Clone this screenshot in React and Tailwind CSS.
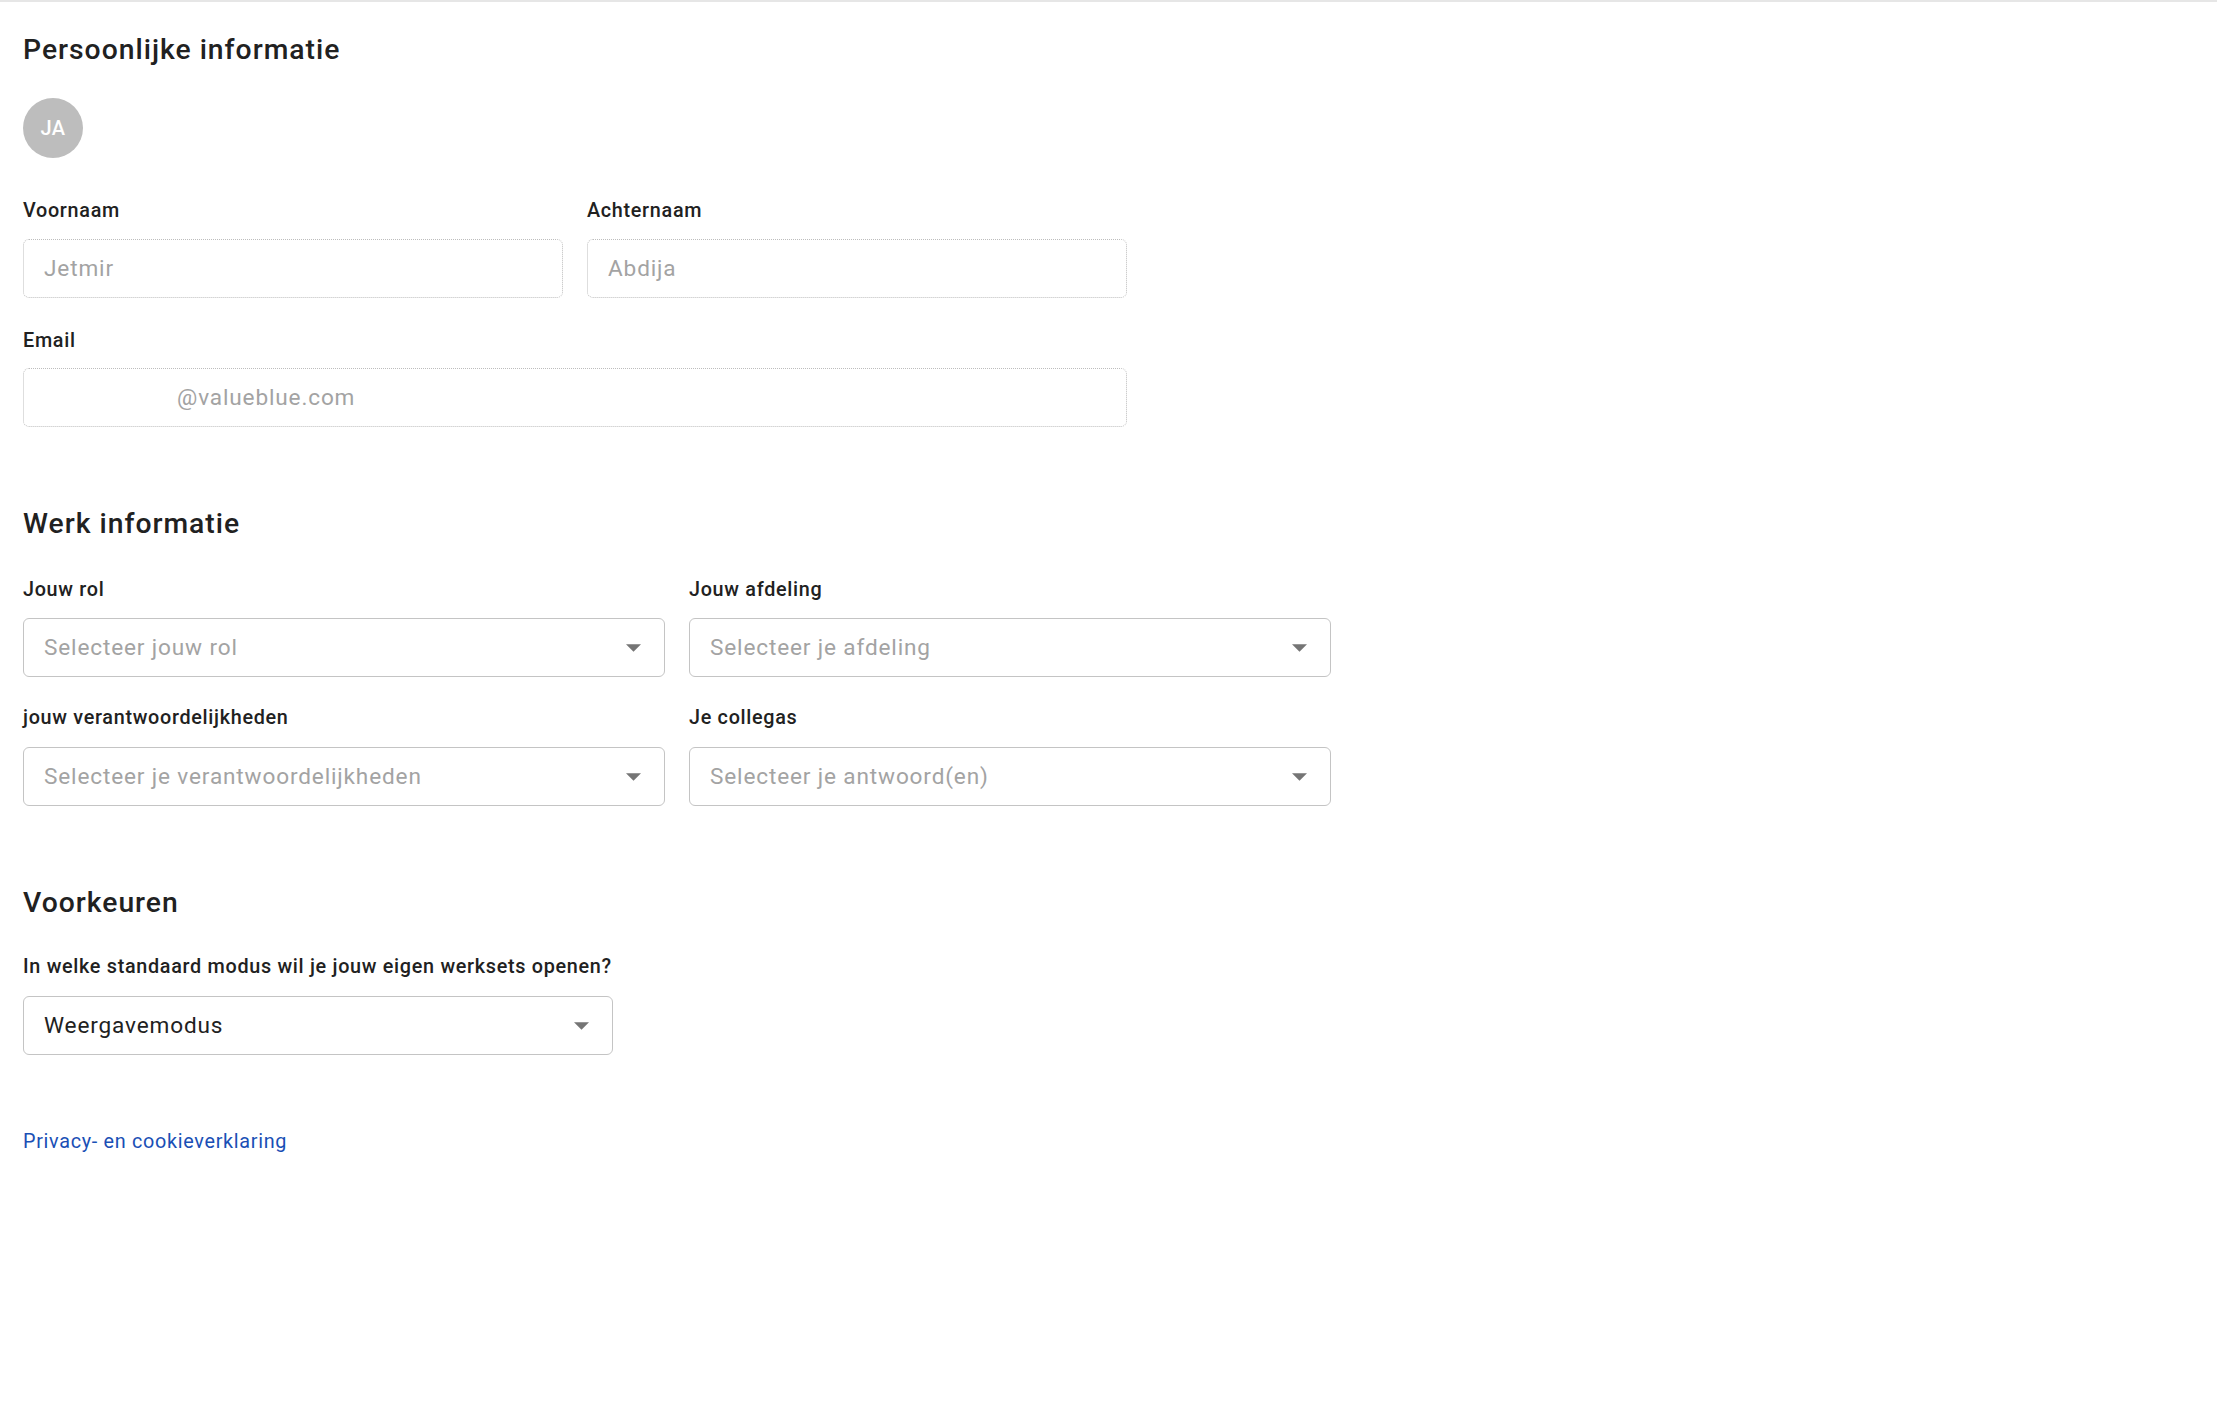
import React from "react";

function Label({ children, className = "" }) {
  return (
    <div className={"text-[19.8px] leading-[24px] font-medium tracking-[0.7px] text-[#212121] " + className}>
      {children}
    </div>
  );
}

function TextField({ placeholder }) {
  return (
    <div className="h-[59px] w-full rounded-[6px] border border-dotted border-[#bdbdbd] flex items-center pl-[20px]">
      <input
        className="w-full bg-transparent outline-none text-[22.6px] tracking-[0.85px] text-[#212121] placeholder:text-[#a3a3a3]"
        placeholder={placeholder}
      />
    </div>
  );
}

function Arrow() {
  return (
    <svg width="15" height="8" viewBox="0 0 10 5" className="shrink-0">
      <path d="M0 0 L5 5 L10 0 Z" fill="#757575" />
    </svg>
  );
}

function Select({ text, placeholder = true, className = "" }) {
  return (
    <div
      className={
        "h-[59px] rounded-[6px] border border-[#c4c4c4] flex items-center justify-between pl-[20px] pr-[23px] " +
        className
      }
    >
      <span className={"text-[22.6px] tracking-[0.85px] " + (placeholder ? "text-[#a3a3a3]" : "text-[#212121]")}>
        {text}
      </span>
      <Arrow />
    </div>
  );
}

function Heading({ children, className = "" }) {
  return (
    <h2 className={"text-[28.3px] leading-[34px] font-medium tracking-[1px] text-[#212121] " + className}>
      {children}
    </h2>
  );
}

export default function App() {
  return (
    <div className="min-h-[1402px] w-full bg-white border-t-2 border-[#e6e6e6] font-['Roboto',sans-serif] pl-[23px]">
      {/* Persoonlijke informatie */}
      <Heading className="mt-[31px]">Persoonlijke informatie</Heading>
      <div className="mt-[31px] w-[60px] h-[60px] rounded-full bg-[#bdbdbd] flex items-center justify-center text-white text-[20px] font-medium tracking-[0.5px]">
        JA
      </div>

      <div className="mt-[41px] grid grid-cols-[540px_540px] gap-x-[24px]">
        <div>
          <Label>Voornaam</Label>
          <div className="mt-[16px]">
            <TextField placeholder="Jetmir" />
          </div>
        </div>
        <div>
          <Label>Achternaam</Label>
          <div className="mt-[16px]">
            <TextField placeholder="Abdija" />
          </div>
        </div>
      </div>

      <Label className="mt-[31px]">Email</Label>
      <div className="mt-[15px] w-[1104px] h-[59px] rounded-[6px] border border-dotted border-[#bdbdbd] flex items-center pl-[20px]">
        <input className="w-[133px] bg-transparent outline-none text-[22.6px] text-[#212121]" />
        <span className="text-[22.6px] tracking-[0.85px] text-[#a3a3a3]">@valueblue.com</span>
      </div>

      {/* Werk informatie */}
      <Heading className="mt-[80px]">Werk informatie</Heading>
      <div className="mt-[37px] grid grid-cols-[642px_642px] gap-x-[24px]">
        <div>
          <Label>Jouw rol</Label>
          <Select className="mt-[16px]" text="Selecteer jouw rol" />
        </div>
        <div>
          <Label>Jouw afdeling</Label>
          <Select className="mt-[16px]" text="Selecteer je afdeling" />
        </div>
        <div className="mt-[29px]">
          <Label>jouw verantwoordelijkheden</Label>
          <Select className="mt-[17px]" text="Selecteer je verantwoordelijkheden" />
        </div>
        <div className="mt-[29px]">
          <Label>Je collegas</Label>
          <Select className="mt-[17px]" text="Selecteer je antwoord(en)" />
        </div>
      </div>

      {/* Voorkeuren */}
      <Heading className="mt-[80px]">Voorkeuren</Heading>
      <Label className="mt-[35px]">In welke standaard modus wil je jouw eigen werksets openen?</Label>
      <Select className="mt-[17px] w-[590px]" text="Weergavemodus" placeholder={false} />

      <a href="#" className="mt-[75px] block w-fit text-[19.8px] leading-[24px] tracking-[0.7px] text-[#1a4fb5]">
        Privacy- en cookieverklaring
      </a>
    </div>
  );
}
